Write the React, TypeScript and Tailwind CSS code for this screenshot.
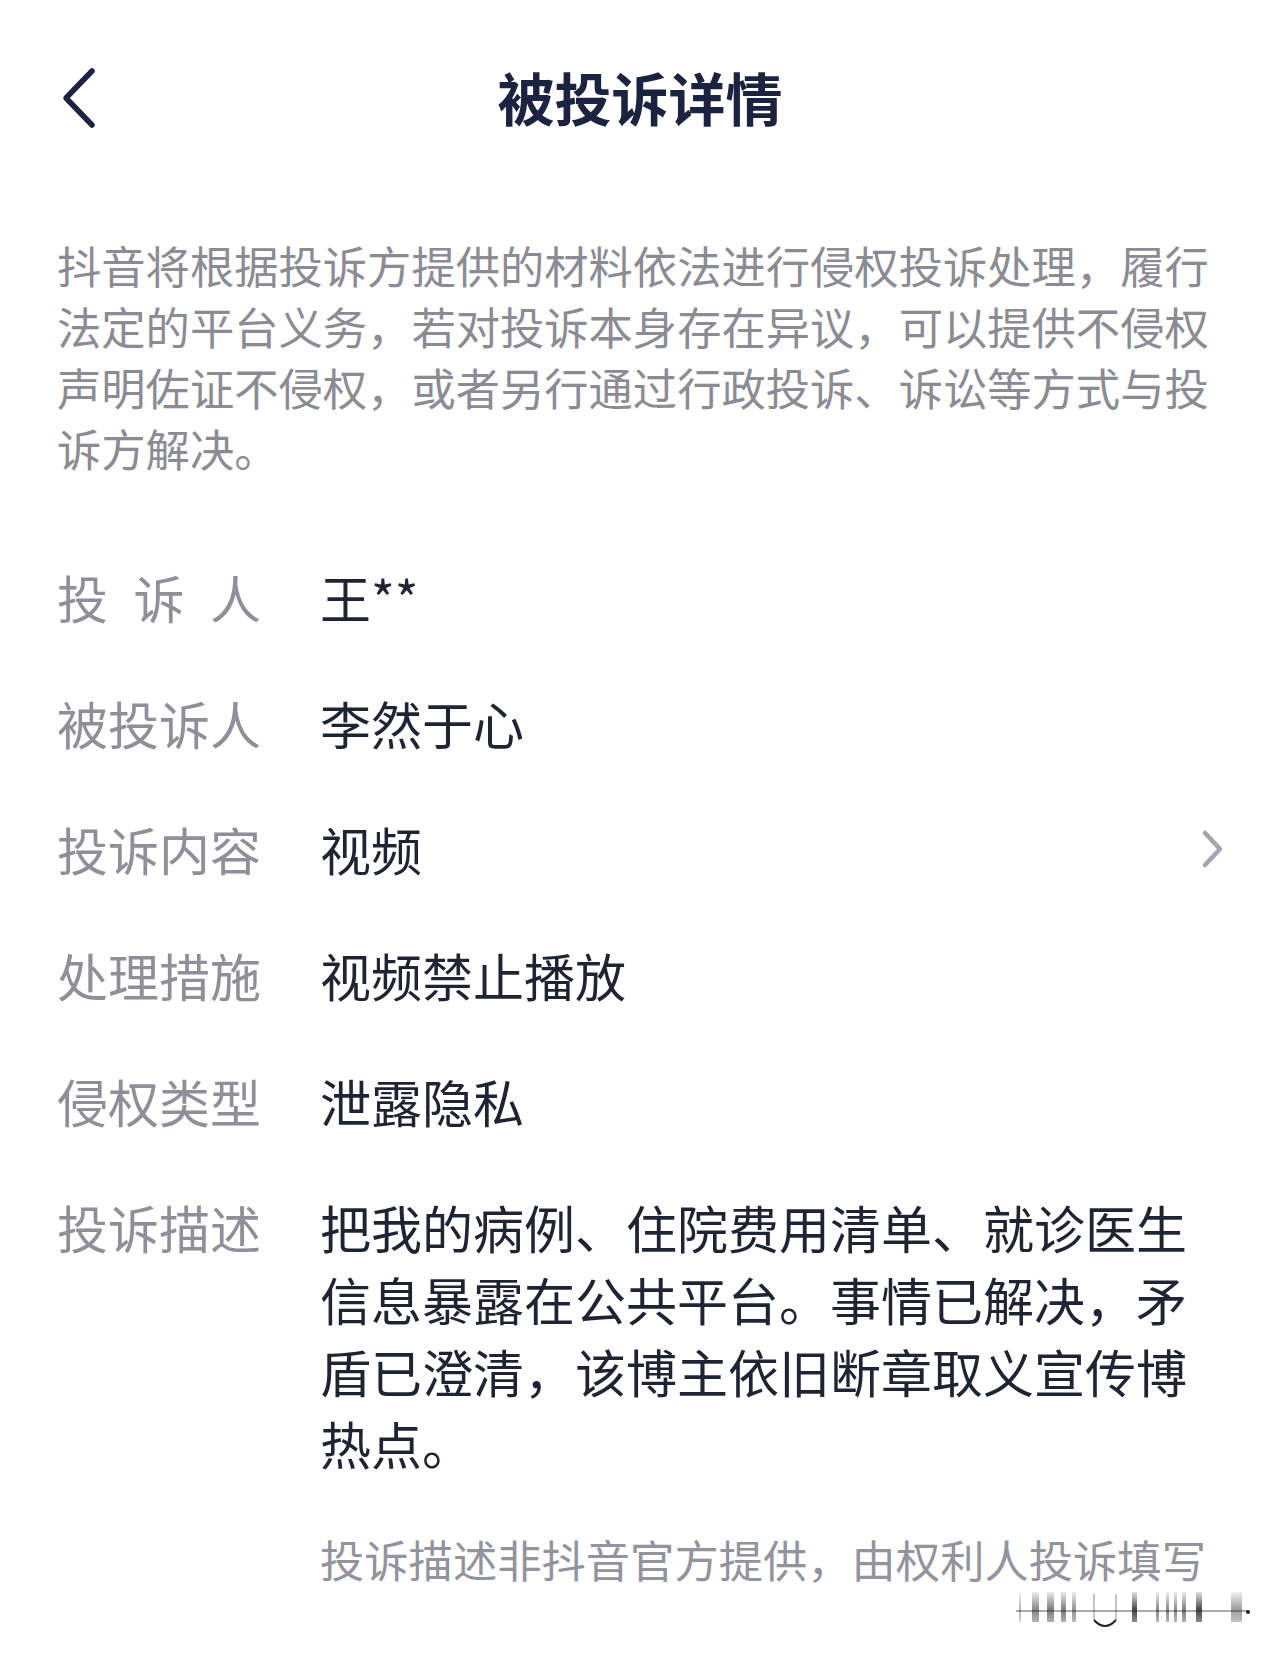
import React from "react";

const FONT = { fontFamily: '"Noto Sans CJK SC", "Noto Sans", sans-serif' };

const rows: { label: string; value: string; link?: boolean }[] = [
  { label: "被投诉人", value: "李然于心" },
  { label: "投诉内容", value: "视频", link: true },
  { label: "处理措施", value: "视频禁止播放" },
  { label: "侵权类型", value: "泄露隐私" },
];

function BackIcon() {
  return (
    <svg width="44" height="78" viewBox="0 0 44 78" fill="none">
      <path d="M36 14 L10 41 L36 68" stroke="#1d2443" strokeWidth="5.5" strokeLinecap="round" strokeLinejoin="round" />
    </svg>
  );
}

function ChevronRight() {
  return (
    <svg width="24" height="40" viewBox="0 0 24 40" fill="none">
      <path d="M5 4 L20 20 L5 36" stroke="#a3a4ad" strokeWidth="4.5" strokeLinecap="round" strokeLinejoin="round" />
    </svg>
  );
}

// blurred watermark strip at the bottom of the screenshot
function Scribble() {
  const bars: [number, number, number][] = [
    [3, 2, 0.35], [16, 7, 0.55], [31, 7, 0.6], [45, 5, 0.6], [56, 4, 0.5],
    [116, 5, 0.85], [140, 3, 0.55], [150, 3, 0.55], [158, 3, 0.55], [166, 4, 0.6],
    [180, 6, 0.85], [215, 11, 0.45],
  ];
  return (
    <svg width="236" height="40" viewBox="0 0 236 40" fill="none">
      <defs>
        <linearGradient id="fade" x1="0" y1="0" x2="0" y2="1">
          <stop offset="0" stopColor="#222" stopOpacity="0.15" />
          <stop offset="0.6" stopColor="#222" stopOpacity="1" />
          <stop offset="1" stopColor="#222" stopOpacity="0.6" />
        </linearGradient>
      </defs>
      {bars.map(([x, w, o], i) => (
        <rect key={i} x={x} y={2} width={w} height={30} fill="url(#fade)" opacity={o} />
      ))}
      <path d="M78 4 V30" stroke="#555" strokeOpacity="0.35" strokeWidth="2" />
      <path d="M100 4 V30" stroke="#555" strokeOpacity="0.35" strokeWidth="2" />
      <path d="M78 30 Q89 42 100 30" stroke="#222" strokeWidth="2" fill="none" />
      <path d="M0 21 H232" stroke="#333" strokeOpacity="0.55" strokeWidth="1.5" />
      <circle cx="232" cy="22" r="2" fill="#222" />
    </svg>
  );
}

export default function App() {
  return (
    <main className="min-h-screen w-[1280px] bg-white" style={FONT}>
      <header className="grid h-[192px] grid-cols-[1fr_auto_1fr] items-center px-[56px]">
        <div className="flex items-center">
          <BackIcon />
        </div>
        <h1 className="text-[57px] font-bold leading-[57px] text-[#1c2340]">被投诉详情</h1>
        <div />
      </header>

      <p className="mt-[43px] pl-[57px] pr-[56px] text-[44.3px] leading-[61px] text-[#8b8b94]">
        抖音将根据投诉方提供的材料依法进行侵权投诉处理，履行法定的平台义务，若对投诉本身存在异议，可以提供不侵权声明佐证不侵权，或者另行通过行政投诉、诉讼等方式与投诉方解决。
      </p>

      <section className="mt-[82px] flex flex-col gap-[54px] pl-[57px] pr-[56px] text-[51px] leading-[72px]">
        <div className="flex items-center">
          <div className="flex w-[204px] justify-between text-[#8e8f99]">
            <span>投</span>
            <span>诉</span>
            <span>人</span>
          </div>
          <span className="ml-[59px] text-[#1f2433]">王**</span>
        </div>

        {rows.map((r) => (
          <div key={r.label} className="flex items-center">
            <div className="w-[204px] text-[#8e8f99]">{r.label}</div>
            <span className="ml-[59px] flex-1 text-[#1f2433]">{r.value}</span>
            {r.link && <ChevronRight />}
          </div>
        ))}

        <div className="flex items-start">
          <div className="w-[204px] shrink-0 text-[#8e8f99]">投诉描述</div>
          <p className="ml-[59px] w-[890px] text-[#1f2433]">
            把我的病例、住院费用清单、就诊医生信息暴露在公共平台。事情已解决，矛盾已澄清，该博主依旧断章取义宣传博热点。
          </p>
        </div>
      </section>

      <p className="mt-[50px] pl-[320px] text-[44.3px] leading-[61px] text-[#92939c]">
        投诉描述非抖音官方提供，由权利人投诉填写
      </p>

      <div className="flex justify-end pr-[28px]">
        <Scribble />
      </div>
    </main>
  );
}
